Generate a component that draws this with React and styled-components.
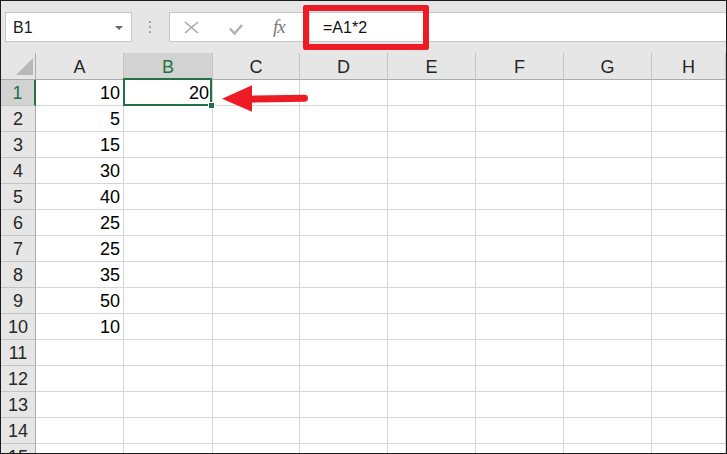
import React from 'react';
import styled, { createGlobalStyle } from 'styled-components';

const GlobalStyle = createGlobalStyle`
  body {
    margin: 0;
    background: #ffffff;
  }
`;

const GREEN = '#217346';
const GRID = '#d4d4d4';

const Frame = styled.div`
  position: relative;
  width: 727px;
  height: 454px;
  box-sizing: border-box;
  border: 1px solid #1c1c1c;
  overflow: hidden;
  background: #ffffff;
  font-family: "Liberation Sans", Arial, sans-serif;
  color: #000000;
`;

const Toolbar = styled.div`
  height: 52px;
  box-sizing: border-box;
  background: #e6e6e6;
  display: flex;
  align-items: flex-start;
  padding: 11px 0 0 4px;
`;

const NameBox = styled.div`
  width: 127px;
  height: 30px;
  box-sizing: border-box;
  background: #ffffff;
  border: 1px solid #c6c6c6;
  display: flex;
  align-items: center;
  justify-content: space-between;
  padding: 1px 8px 0 7px;
  font-size: 16px;
  color: #1a1a1a;
`;

const DropArrow = styled.span`
  width: 0;
  height: 0;
  border-left: 4px solid transparent;
  border-right: 4px solid transparent;
  border-top: 4px solid #6a6a6a;
  margin-top: 1px;
`;

const Grip = styled.div`
  margin: 9px 0 0 17px;
  display: flex;
  flex-direction: column;
  gap: 3px;
`;

const GripDot = styled.span`
  width: 2px;
  height: 2px;
  background: #a3a3a3;
`;

const FormulaBar = styled.div`
  flex: 1;
  margin-left: 18px;
  height: 30px;
  box-sizing: border-box;
  background: #ffffff;
  border: 1px solid #c6c6c6;
  border-right: none;
  display: flex;
`;

const IconRow = styled.div`
  width: 139px;
  display: flex;
  align-items: center;
  gap: 30px;
  padding-left: 14px;
  box-sizing: border-box;
`;

const Fx = styled.span`
  font-family: "Liberation Serif", "Times New Roman", serif;
  font-style: italic;
  font-size: 19px;
  color: #7a7a7a;
  letter-spacing: -1px;
  margin-top: -1px;
`;

const FormulaInput = styled.div`
  flex: 1;
  border-left: 1px solid #d4d4d4;
  display: flex;
  align-items: center;
  padding: 1px 0 0 13px;
  font-size: 16px;
  color: #111111;
`;

const Sheet = styled.div`
  display: grid;
  grid-template-columns: 35px 88px 89px 87px 88px 88px 88px 88px 1fr;
  grid-template-rows: 27px;
  grid-auto-rows: 26px;
`;

const Corner = styled.div`
  background: #e6e6e6;
  border-right: 1px solid #ababab;
  border-bottom: 1px solid #ababab;
  display: flex;
  align-items: flex-start;
  justify-content: flex-end;
  padding: 5px 2px 0 0;
`;

const ColHeader = styled.div`
  background: ${({ $selected }) => ($selected ? '#d2d2d2' : '#e6e6e6')};
  color: ${({ $selected }) => ($selected ? GREEN : '#262626')};
  border-right: 1px solid #c4c4c4;
  border-bottom: 1px solid #ababab;
  display: flex;
  align-items: center;
  justify-content: center;
  padding-top: 2px;
  font-size: 18px;
`;

const RowHeader = styled.div`
  background: ${({ $selected }) => ($selected ? '#d2d2d2' : '#e6e6e6')};
  color: ${({ $selected }) => ($selected ? GREEN : '#262626')};
  border-right: ${({ $selected }) => ($selected ? `2px solid ${GREEN}` : '1px solid #ababab')};
  border-bottom: 1px solid #c4c4c4;
  display: flex;
  align-items: center;
  justify-content: center;
  padding-top: 2px;
  font-size: 18px;
`;

const Cell = styled.div`
  position: relative;
  border-right: 1px solid ${GRID};
  border-bottom: 1px solid ${GRID};
  display: flex;
  align-items: center;
  justify-content: flex-end;
  padding: 2px 3px 0 0;
  font-size: 18px;

  ${({ $active }) =>
    $active &&
    `
    &::after {
      content: '';
      position: absolute;
      top: -2px;
      left: -1px;
      right: 0;
      bottom: -1px;
      border: 2px solid ${GREEN};
      pointer-events: none;
    }
  `}
`;

const FillHandle = styled.span`
  position: absolute;
  right: -3px;
  bottom: -4px;
  width: 5px;
  height: 5px;
  background: ${GREEN};
  border: 1px solid #ffffff;
  z-index: 2;
`;

const Highlight = styled.div`
  position: absolute;
  left: 302px;
  top: 4px;
  width: 126px;
  height: 45px;
  box-sizing: border-box;
  border: 6px solid #ed1c24;
  border-radius: 2px;
`;

const Arrow = styled.svg`
  position: absolute;
  left: 218px;
  top: 81px;
`;

const columns = ['A', 'B', 'C', 'D', 'E', 'F', 'G', 'H'];
const colA = [10, 5, 15, 30, 40, 25, 25, 35, 50, 10];
const rowCount = 15;

function CloseIcon() {
  return (
    <svg width="15" height="13" viewBox="0 0 15 13">
      <path d="M1 1 L14 12 M14 1 L1 12" stroke="#a8a8a8" strokeWidth="1.6" fill="none" />
    </svg>
  );
}

function CheckIcon() {
  return (
    <svg width="14" height="11" viewBox="0 0 14 11" style={{ marginTop: 4 }}>
      <polyline points="1,4.5 5.5,9.5 13,1" stroke="#b0b0b0" strokeWidth="2.4" fill="none" />
    </svg>
  );
}

export default function App() {
  return (
    <>
      <GlobalStyle />
      <Frame>
        <Toolbar>
          <NameBox>
            <span>B1</span>
            <DropArrow />
          </NameBox>
          <Grip>
            <GripDot />
            <GripDot />
            <GripDot />
          </Grip>
          <FormulaBar>
            <IconRow>
              <CloseIcon />
              <CheckIcon />
              <Fx>fx</Fx>
            </IconRow>
            <FormulaInput>=A1*2</FormulaInput>
          </FormulaBar>
        </Toolbar>

        <Sheet>
          <Corner>
            <svg width="17" height="17" viewBox="0 0 17 17">
              <polygon points="17,0 17,17 0,17" fill="#b8b8b8" />
            </svg>
          </Corner>
          {columns.map((c) => (
            <ColHeader key={c} $selected={c === 'B'}>
              {c}
            </ColHeader>
          ))}
          {Array.from({ length: rowCount }, (_, i) => {
            const row = i + 1;
            return (
              <React.Fragment key={row}>
                <RowHeader $selected={row === 1}>{row}</RowHeader>
                {columns.map((c) => {
                  const active = row === 1 && c === 'B';
                  let value = '';
                  if (c === 'A' && colA[i] !== undefined) value = colA[i];
                  if (active) value = 20;
                  return (
                    <Cell key={c} $active={active}>
                      {value}
                      {active && <FillHandle />}
                    </Cell>
                  );
                })}
              </React.Fragment>
            );
          })}
        </Sheet>

        <Highlight />
        <Arrow width="92" height="32" viewBox="0 0 92 32">
          <polygon points="3,16.7 33,3.3 33,29.7" fill="#ed1c24" />
          <line x1="30" y1="17.2" x2="85.5" y2="16.2" stroke="#ed1c24" strokeWidth="7" strokeLinecap="round" />
        </Arrow>
      </Frame>
    </>
  );
}
